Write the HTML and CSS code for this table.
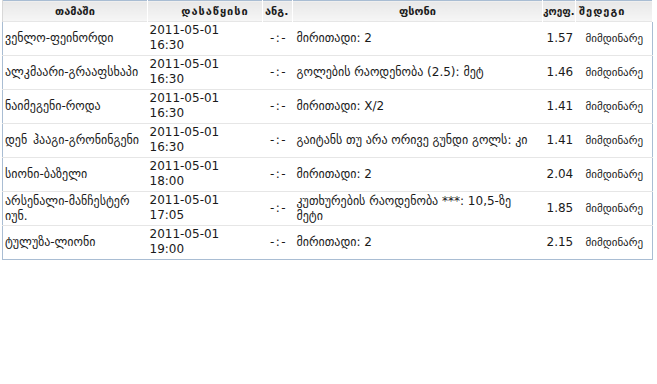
FILE: index.html
```html
<!DOCTYPE html>
<html>
<head>
<meta charset="utf-8">
<link rel="stylesheet" href="styles.css">
</head>
<body>
<table class="bets">
  <colgroup>
    <col class="c-game"><col class="c-date"><col class="c-score"><col class="c-bet"><col class="c-odd"><col class="c-res">
  </colgroup>
  <thead>
    <tr>
      <th class="h-game">თამაში</th>
      <th class="h-date">დასაწყისი</th>
      <th class="h-score">ანგ.</th>
      <th class="h-bet">ფსონი</th>
      <th class="h-odd">კოეფ.</th>
      <th class="h-res">შედეგი</th>
    </tr>
  </thead>
  <tbody>
    <tr>
      <td class="game">ვენლო-ფეინორდი</td>
      <td class="date">2011-05-01<br>16:30</td>
      <td class="score">-:-</td>
      <td class="bet">მირითადი: 2</td>
      <td class="odd">1.57</td>
      <td class="res">მიმდინარე</td>
    </tr>
    <tr>
      <td class="game">ალკმაარი-გრააფსხაპი</td>
      <td class="date">2011-05-01<br>16:30</td>
      <td class="score">-:-</td>
      <td class="bet">გოლების რაოდენობა (2.5): მეტ</td>
      <td class="odd">1.46</td>
      <td class="res">მიმდინარე</td>
    </tr>
    <tr>
      <td class="game">ნაიმეგენი-როდა</td>
      <td class="date">2011-05-01<br>16:30</td>
      <td class="score">-:-</td>
      <td class="bet">მირითადი: X/2</td>
      <td class="odd">1.41</td>
      <td class="res">მიმდინარე</td>
    </tr>
    <tr>
      <td class="game">დენ ჰააგი-გრონინგენი</td>
      <td class="date">2011-05-01<br>16:30</td>
      <td class="score">-:-</td>
      <td class="bet">გაიტანს თუ არა ორივე გუნდი გოლს: კი</td>
      <td class="odd">1.41</td>
      <td class="res">მიმდინარე</td>
    </tr>
    <tr>
      <td class="game">სიონი-ბაზელი</td>
      <td class="date">2011-05-01<br>18:00</td>
      <td class="score">-:-</td>
      <td class="bet">მირითადი: 2</td>
      <td class="odd">2.04</td>
      <td class="res">მიმდინარე</td>
    </tr>
    <tr>
      <td class="game">არსენალი-მანჩესტერ იუნ.</td>
      <td class="date">2011-05-01<br>17:05</td>
      <td class="score">-:-</td>
      <td class="bet">კუთხურების რაოდენობა ***: 10,5-ზე მეტი</td>
      <td class="odd">1.85</td>
      <td class="res">მიმდინარე</td>
    </tr>
    <tr>
      <td class="game">ტულუზა-ლიონი</td>
      <td class="date">2011-05-01<br>19:00</td>
      <td class="score">-:-</td>
      <td class="bet">მირითადი: 2</td>
      <td class="odd">2.15</td>
      <td class="res">მიმდინარე</td>
    </tr>
  </tbody>
</table>
</body>
</html>
```

FILE: styles.css
```css
html, body {
  margin: 0;
  padding: 0;
  background: #ffffff;
}
body {
  padding-left: 2px;
  font-family: "DejaVu Sans", "Liberation Sans", sans-serif;
  font-size: 12px;
  color: #1a1a1a;
}
.bets {
  width: 650px;
  border-collapse: collapse;
  table-layout: fixed;
  border: 1px solid #a9bdd3;
}
.c-game { width: 145px; }
.c-date { width: 115px; }
.c-score { width: 30px; }
.c-bet { width: 250px; }
.c-odd { width: 33px; }
.c-res { width: 77px; }

.bets th {
  height: 20px;
  padding: 0;
  font-size: 11px;
  font-weight: bold;
  color: #1c1c1c;
  text-align: center;
  background: linear-gradient(#e8e8e8, #f6f6f6);
  border-right: 1px solid #ffffff;
  border-left: 1px solid #d8d8d8;
  white-space: nowrap;
}
.bets th.h-date { padding-left: 20px; letter-spacing: 1px; }
.bets th.h-score { text-align: left; padding-left: 2px; }
.bets th.h-odd { text-align: left; font-size: 10px; }
.bets th.h-res { text-align: left; padding-left: 3px; letter-spacing: 1px; }

.bets td {
  height: 32px;
  padding: 0 2px;
  font-size: 12px;
  line-height: 15px;
  vertical-align: middle;
  border-top: 1px solid #e6e6e6;
}
.bets td.game {
  word-spacing: 2px;
}
.bets td.date {
  vertical-align: top;
  padding-top: 1px;
}
.bets td.score {
  text-align: center;
  letter-spacing: 1.5px;
  padding-left: 4px;
}
.bets td.bet {
  padding-left: 4px;
}
.bets td.odd {
  padding-left: 4px;
  padding-right: 0;
}
.bets td.res {
  font-size: 11px;
  padding-left: 10px;
}
```
